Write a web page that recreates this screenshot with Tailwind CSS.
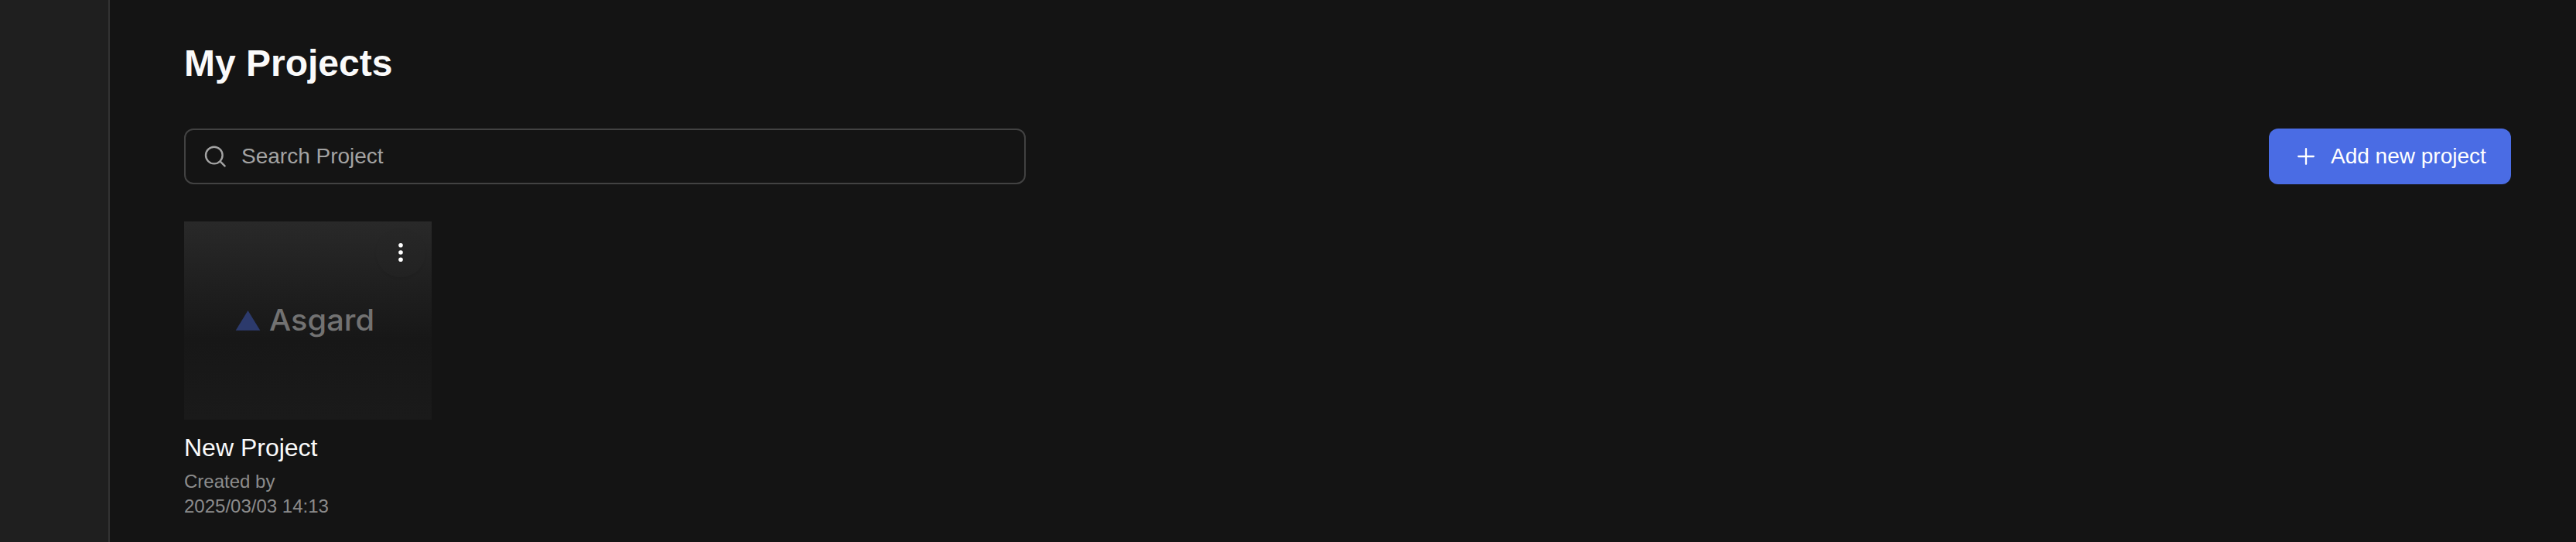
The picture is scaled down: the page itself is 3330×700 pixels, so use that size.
<!DOCTYPE html>
<html lang="en">
<head>
<meta charset="utf-8">
<title>My Projects</title>
<script src="https://cdn.jsdelivr.net/npm/@tailwindcss/browser@4"></script>
</head>
<body class="bg-[#141414] font-['Liberation_Sans',Arial,sans-serif] text-white">
<div class="flex h-[700px] overflow-hidden">
  <aside class="w-[142px] shrink-0 border-r-2 border-[#333333] bg-[#1f1f1f]"></aside>
  <main class="flex-1 pl-24 pr-[84px] pt-[58px]">
    <h1 class="text-5xl leading-[48px] font-bold text-[#fafafa]">My Projects</h1>
    <div class="mt-15 flex items-center justify-between">
      <label class="flex h-[72px] w-[1088px] items-center gap-[14px] rounded-xl border-2 border-[#424242] pl-[22px]">
        <svg class="size-9 shrink-0" viewBox="0 0 36 36" fill="none" stroke="#a3a3a3" stroke-width="2.4" stroke-linecap="round"><circle cx="14.8" cy="16.6" r="10.8"/><path d="M22.6 24.4L28.6 30.4"/></svg>
        <span class="text-[28px] leading-8 text-[#a3a3a3]">Search Project</span>
      </label>
      <button class="flex h-[72px] w-[313px] items-center gap-4 rounded-xl bg-[#4a6ce4] pl-8">
        <svg class="size-8 shrink-0" viewBox="0 0 32 32" fill="none" stroke="#fff" stroke-width="2.3" stroke-linecap="round"><path d="M16 6.2v19.6M6.2 16h19.6"/></svg>
        <span class="whitespace-nowrap text-[28px] leading-8">Add new project</span>
      </button>
    </div>
    <article class="mt-12 w-80">
      <div class="relative flex h-64 items-center justify-center bg-linear-to-b from-[#292929] via-[#171717] via-60% to-[#1a1a1a]">
        <svg class="h-16 w-48" viewBox="0 0 192 64">
          <path d="M18.5 19L34.3 44.7H2.7z" fill="#2c3a6c"/>
          <text x="46" y="45" textLength="136" lengthAdjust="spacingAndGlyphs" font-size="38.5" font-weight="500" fill="#727272" class="font-['Inter',sans-serif]">Asgard</text>
        </svg>
        <button class="absolute right-2 top-2 flex size-16 items-center justify-center rounded-full bg-linear-to-b from-[#272727] to-[#222222] shadow-[0_2px_3px_rgba(0,0,0,0.06)]">
          <svg class="size-8" viewBox="0 0 32 32" fill="#fff"><circle cx="16" cy="6.7" r="2.8"/><circle cx="16" cy="16" r="2.8"/><circle cx="16" cy="25.3" r="2.8"/></svg>
        </button>
      </div>
      <h2 class="mt-4 text-[32px] leading-10 text-[#fafafa]">New Project</h2>
      <p class="mt-2 text-2xl leading-8 text-[#8c8c8c]">Created by<br>2025/03/03 14:13</p>
    </article>
  </main>
</div>
</body>
</html>
